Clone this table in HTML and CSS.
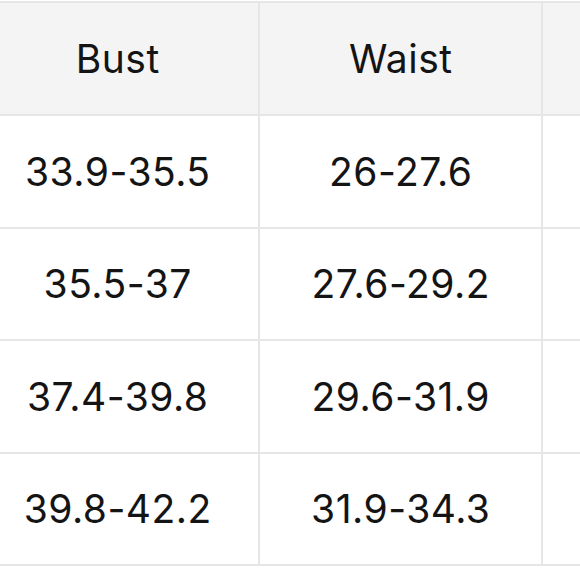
FILE: index.html
```html
<!DOCTYPE html>
<html>
<head>
<meta charset="utf-8">
<link rel="stylesheet" href="styles.css">
</head>
<body>
<div class="viewport">
  <div class="chart">
    <div class="cell head"></div>
    <div class="cell head">Bust</div>
    <div class="cell head">Waist</div>
    <div class="cell head"></div>

    <div class="cell"></div>
    <div class="cell">33.9-35.5</div>
    <div class="cell">26-27.6</div>
    <div class="cell"></div>

    <div class="cell"></div>
    <div class="cell">35.5-37</div>
    <div class="cell">27.6-29.2</div>
    <div class="cell"></div>

    <div class="cell"></div>
    <div class="cell">37.4-39.8</div>
    <div class="cell">29.6-31.9</div>
    <div class="cell"></div>

    <div class="cell"></div>
    <div class="cell">39.8-42.2</div>
    <div class="cell">31.9-34.3</div>
    <div class="cell"></div>
  </div>
</div>
</body>
</html>
```

FILE: styles.css
```css
html, body {
  margin: 0;
  padding: 0;
  background: #ffffff;
}

body {
  font-family: Inter, "Liberation Sans", Arial, sans-serif;
}

.viewport {
  width: 580px;
  height: 580px;
  overflow: hidden;
}

.chart {
  display: grid;
  grid-template-columns: 281px 281px 281px 281px;
  grid-template-rows: 111px repeat(4, 110.5px);
  column-gap: 2px;
  row-gap: 2px;
  padding: 2px 0;
  margin-top: 1px;
  margin-left: -306px;
  width: max-content;
  background: #e6e6e6;
}

.cell {
  background: #ffffff;
  display: flex;
  align-items: center;
  justify-content: center;
  padding-left: 0.5px;
  font-size: 39px;
  letter-spacing: 0.5px;
  color: #141414;
}

.head {
  background: #f4f4f4;
}
```
